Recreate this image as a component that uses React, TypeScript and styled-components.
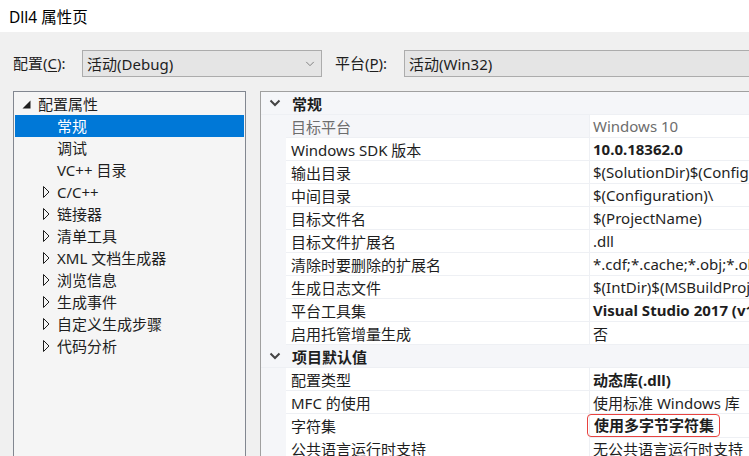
import React from "react";
import styled, { createGlobalStyle } from "styled-components";

const GlobalStyle = createGlobalStyle`
  html, body {
    margin: 0;
    padding: 0;
    background: #f0f0f0;
  }
  body {
    font-family: "Noto Sans", "Noto Sans CJK SC", sans-serif;
    font-size: 15px;
    color: #000;
  }
`;

type TreeItem = { label: string; level: 0 | 1; expander?: "open" | "closed"; selected?: boolean };

const tree: TreeItem[] = [
  { label: "配置属性", level: 0, expander: "open" },
  { label: "常规", level: 1, selected: true },
  { label: "调试", level: 1 },
  { label: "VC++ 目录", level: 1 },
  { label: "C/C++", level: 1, expander: "closed" },
  { label: "链接器", level: 1, expander: "closed" },
  { label: "清单工具", level: 1, expander: "closed" },
  { label: "XML 文档生成器", level: 1, expander: "closed" },
  { label: "浏览信息", level: 1, expander: "closed" },
  { label: "生成事件", level: 1, expander: "closed" },
  { label: "自定义生成步骤", level: 1, expander: "closed" },
  { label: "代码分析", level: 1, expander: "closed" },
];

type Prop = { name: string; value: string; bold?: boolean; readOnly?: boolean; marked?: boolean };
type Group = { title: string; props: Prop[] };

const groups: Group[] = [
  {
    title: "常规",
    props: [
      { name: "目标平台", value: "Windows 10", readOnly: true },
      { name: "Windows SDK 版本", value: "10.0.18362.0", bold: true },
      { name: "输出目录", value: "$(SolutionDir)$(Configuration)\\" },
      { name: "中间目录", value: "$(Configuration)\\" },
      { name: "目标文件名", value: "$(ProjectName)" },
      { name: "目标文件扩展名", value: ".dll" },
      { name: "清除时要删除的扩展名", value: "*.cdf;*.cache;*.obj;*.obj.enc;*.ilk" },
      { name: "生成日志文件", value: "$(IntDir)$(MSBuildProjectName).log" },
      { name: "平台工具集", value: "Visual Studio 2017 (v141)", bold: true },
      { name: "启用托管增量生成", value: "否" },
    ],
  },
  {
    title: "项目默认值",
    props: [
      { name: "配置类型", value: "动态库(.dll)", bold: true },
      { name: "MFC 的使用", value: "使用标准 Windows 库" },
      { name: "字符集", value: "使用多字节字符集", bold: true, marked: true },
      { name: "公共语言运行时支持", value: "无公共语言运行时支持" },
    ],
  },
];

const Chevron = ({ color = "#444", size = 12, stroke = 2 }: { color?: string; size?: number; stroke?: number }) => (
  <svg width={size} height={size} viewBox="0 0 12 12">
    <polyline points="1.5,3.5 6,8 10.5,3.5" fill="none" stroke={color} strokeWidth={stroke} />
  </svg>
);

const Expander = ({ kind }: { kind: "open" | "closed" }) =>
  kind === "open" ? (
    <svg width="9" height="9" viewBox="0 0 9 9">
      <polygon points="8.5,0.5 8.5,8.5 0.5,8.5" fill="#1e1e1e" />
    </svg>
  ) : (
    <svg width="7" height="12" viewBox="0 0 7 12">
      <polygon points="0.5,0.5 6,6 0.5,11.5" fill="none" stroke="#1e1e1e" strokeWidth="1" />
    </svg>
  );

export default function App() {
  return (
    <Window>
      <GlobalStyle />
      <TitleBar>Dll4 属性页</TitleBar>
      <Content>
        <Toolbar>
          <Label>
            配置(<u>C</u>):
          </Label>
          <Combo $width={240}>
            <span>活动(Debug)</span>
            <ComboArrow>
              <Chevron color="#6d6d6d" size={10} stroke={1} />
            </ComboArrow>
          </Combo>
          <Label>
            平台(<u>P</u>):
          </Label>
          <Combo $width={420}>
            <span>活动(Win32)</span>
          </Combo>
        </Toolbar>
        <Panels>
          <TreePanel>
            {tree.map((item) => (
              <TreeRow key={item.label} $selected={item.selected}>
                <ExpanderSlot $level={item.level}>
                  {item.expander && <Expander kind={item.expander} />}
                </ExpanderSlot>
                <TreeLabel>{item.label}</TreeLabel>
              </TreeRow>
            ))}
          </TreePanel>
          <Grid>
            {groups.map((g) => (
              <React.Fragment key={g.title}>
                <GroupRow>
                  <GroupToggle>
                    <Chevron />
                  </GroupToggle>
                  <GroupTitle>{g.title}</GroupTitle>
                </GroupRow>
                {g.props.map((p) => (
                  <PropRow key={p.name}>
                    <Gutter />
                    <NameCell $readOnly={p.readOnly}>{p.name}</NameCell>
                    <ValueCell $readOnly={p.readOnly} $bold={p.bold}>
                      {p.marked ? <Marked>{p.value}</Marked> : p.value}
                    </ValueCell>
                  </PropRow>
                ))}
              </React.Fragment>
            ))}
          </Grid>
        </Panels>
      </Content>
    </Window>
  );
}

const Window = styled.div`
  width: 749px;
  height: 456px;
  display: flex;
  flex-direction: column;
  overflow: hidden;
  background: #f0f0f0;
`;

const TitleBar = styled.div`
  height: 32px;
  flex: none;
  display: flex;
  align-items: center;
  padding-left: 9px;
  background: #fff;
  font-size: 15.5px;
`;

const Content = styled.div`
  flex: 1;
  min-height: 0;
  display: flex;
  flex-direction: column;
  padding-left: 13px;
`;

const Toolbar = styled.div`
  display: flex;
  align-items: center;
  height: 27px;
  margin-top: 18px;
  margin-bottom: 14px;
  white-space: nowrap;
`;

const Label = styled.span`
  width: 69px;
  flex: none;
  line-height: 27px;
  color: #1e1e1e;

  u {
    text-decoration-thickness: 1px;
    text-underline-offset: 2px;
  }

  & + div + & {
    margin-left: 13px;
  }
`;

const Combo = styled.div<{ $width: number }>`
  width: ${(p) => p.$width}px;
  flex: none;
  box-sizing: border-box;
  height: 27px;
  display: flex;
  align-items: center;
  justify-content: space-between;
  padding: 0 6px 0 4px;
  background: #e5e5e5;
  border: 1px solid #acacac;
  color: #1e1e1e;
`;

const ComboArrow = styled.span`
  display: flex;
  align-items: center;
`;

const Panels = styled.div`
  display: flex;
  gap: 14px;
  align-items: flex-start;
`;

const TreePanel = styled.div`
  width: 233px;
  height: 420px;
  flex: none;
  box-sizing: border-box;
  padding: 1px 1px 0;
  background: #f5f5f5;
  border: 1px solid #828790;
`;

const TreeRow = styled.div<{ $selected?: boolean }>`
  height: 22px;
  display: flex;
  align-items: center;
  background: ${(p) => (p.$selected ? "#0078d7" : "transparent")};
  color: ${(p) => (p.$selected ? "#fff" : "#1e1e1e")};
`;

const ExpanderSlot = styled.span<{ $level: 0 | 1 }>`
  width: ${(p) => (p.$level === 0 ? 23 : 42)}px;
  flex: none;
  display: flex;
  align-items: center;
  justify-content: flex-end;
  padding-right: ${(p) => (p.$level === 0 ? 0 : 7)}px;
  box-sizing: border-box;

  svg {
    margin-right: ${(p) => (p.$level === 0 ? 7 : 0)}px;
  }
`;

const TreeLabel = styled.span`
  line-height: 22px;
  white-space: nowrap;
`;

const Grid = styled.div`
  width: 520px;
  height: 420px;
  flex: none;
  background: #fff;
  border-left: 1px solid #a0a0a0;
  border-top: 1px solid #a0a0a0;
`;

const GroupRow = styled.div`
  height: 23px;
  display: flex;
  align-items: center;
  background: #f5f6f9;
  border-bottom: 1px solid #eef0f4;
  box-sizing: border-box;
`;

const GroupToggle = styled.span`
  width: 25px;
  flex: none;
  display: flex;
  justify-content: center;
  padding-left: 1px;
`;

const GroupTitle = styled.span`
  padding-left: 5px;
  font-weight: 700;
  color: #1e1e1e;
`;

const PropRow = styled.div`
  height: 23px;
  display: grid;
  grid-template-columns: 25px 304px 1fr;
`;

const Gutter = styled.div`
  background: #f5f6f9;
`;

const NameCell = styled.div<{ $readOnly?: boolean }>`
  display: flex;
  align-items: center;
  padding-left: 5px;
  white-space: nowrap;
  background: ${(p) => (p.$readOnly ? "#f5f6f9" : "#fff")};
  color: ${(p) => (p.$readOnly ? "#6d6d6d" : "#1e1e1e")};
  border-right: 1px solid #eef0f4;
  border-bottom: 1px solid #eef0f4;
`;

const ValueCell = styled.div<{ $readOnly?: boolean; $bold?: boolean }>`
  position: relative;
  display: flex;
  align-items: center;
  padding-left: 3px;
  white-space: nowrap;
  font-weight: ${(p) => (p.$bold ? 700 : 400)};
  color: ${(p) => (p.$readOnly ? "#6d6d6d" : "#1e1e1e")};
  border-bottom: 1px solid #eef0f4;
`;

const Marked = styled.span`
  position: relative;
  z-index: 1;
  margin-left: -6px;
  padding: 0 5px 0 6px;
  border: 1.5px solid #e8423f;
  border-radius: 4px;
  line-height: 21px;
`;
